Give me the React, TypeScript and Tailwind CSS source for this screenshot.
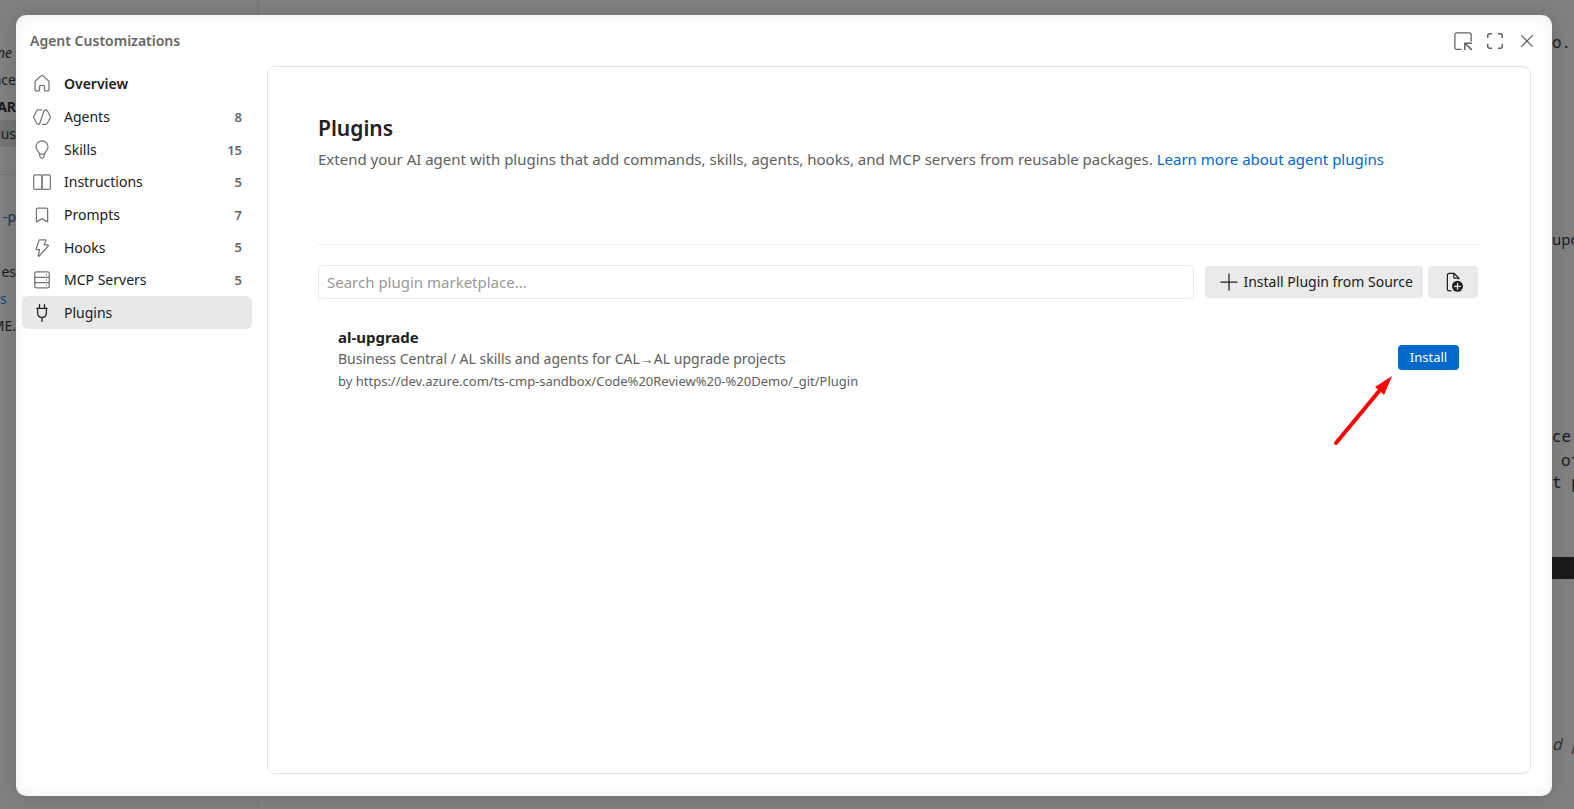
import React from "react";

type IconProps = { children: React.ReactNode; className?: string };

function Icon({ children, className = "size-5" }: IconProps) {
  return (
    <svg
      viewBox="0 0 16 16"
      className={className}
      fill="none"
      stroke="currentColor"
      strokeWidth="1"
      strokeLinecap="round"
      strokeLinejoin="round"
      aria-hidden="true"
    >
      {children}
    </svg>
  );
}

const icons = {
  home: (
    <path d="M7.3 1.5 2.800 5.400A1.200 1.200 0 0 0 2.400 6.300v6.200c0 .6.400 1 1 1h1.800c.5 0 .8-.3.8-.8V10c0-.6.4-1 1-1h2c.6 0 1 .4 1 1v2.700c0 .5.3.8.8.8h1.800c.6 0 1-.4 1-1V6.300c0-.3-.1-.7-.4-.9L8.700 1.500a1 1 0 0 0-1.400 0Z" />
  ),
  agent: (
    <>
      <path d="M7.800 2.200H5.200c-.6 0-1.100.3-1.400.8L1.500 7.200a1.600 1.600 0 0 0 0 1.600L3.700 13c.3.5.8.8 1.300.8.7 0 1.200-.4 1.400-1L9.500 3.200c.2-.6.700-1 1.300-1 .600 0 1.100.3 1.400.8l2.300 4.200c.3.5.3 1.100 0 1.600L12.200 13c-.3.5-.8.8-1.400.8H8.400" />
    </>
  ),
  bulb: (
    <>
      <path d="M6 11.200c-.2-1-.7-1.700-1.400-2.500A4.700 4.700 0 0 1 3.200 5.500a4.800 4.800 0 0 1 9.600 0c0 1.200-.5 2.300-1.400 3.200-.7.800-1.200 1.500-1.400 2.500Z" />
      <path d="m6 11.200.4 2.200c.1.600.500 1 1.100 1h1c.6 0 1-.4 1.100-1l.4-2.200" />
    </>
  ),
  book: (
    <>
      <path d="M8 3.500c0-.8-.6-1.300-1.300-1.300H2.600c-.7 0-1.300.5-1.300 1.300v9c0 .7.600 1.300 1.300 1.300h4.100c.7 0 1.300-.6 1.300-1.300Z" />
      <path d="M8 3.500c0-.8.6-1.300 1.300-1.300h4.100c.7 0 1.300.5 1.300 1.300v9c0 .7-.6 1.300-1.300 1.300H9.300c-.7 0-1.300-.6-1.300-1.300Z" />
    </>
  ),
  bookmark: <path d="M3.500 13.500V3.700c0-.7.6-1.300 1.300-1.300h6.400c.7 0 1.300.6 1.300 1.300v9.800L8 10.900Z" />,
  zap: <path d="M6.200 1.400h4.400c.4 0 .6.300.5.600l-1.400 3.500h2.800c.5 0 .7.500.4.900L5.800 14.400c-.4.400-.9.100-.8-.4l1.100-4.700H3.900c-.4 0-.6-.3-.5-.7l2.200-6.700c.1-.3.300-.5.600-.5Z" />,
  server: (
    <>
      <rect x="2.200" y="1.500" width="11.600" height="12.800" rx="1.400" />
      <path d="M2.200 5.800h11.600M2.200 10h11.600M11.500 3.700h.1M11.500 7.900h.1M11.500 12.200h.1" />
    </>
  ),
  plug: (
    <>
      <path d="M6 1.200v3M10 1.200v3M8 11.500v3.200M3.800 4.200h8.400" />
      <path d="M4.500 4.200v3.500c0 2.300 1.400 3.800 3.500 3.800s3.500-1.500 3.500-3.800V4.200" />
    </>
  ),
};

const navItems: { label: string; icon: keyof typeof icons; count?: number }[] = [
  { label: "Agents", icon: "agent", count: 8 },
  { label: "Skills", icon: "bulb", count: 15 },
  { label: "Instructions", icon: "book", count: 5 },
  { label: "Prompts", icon: "bookmark", count: 7 },
  { label: "Hooks", icon: "zap", count: 5 },
  { label: "MCP Servers", icon: "server", count: 5 },
  { label: "Plugins", icon: "plug" },
];

function Backdrop() {
  return (
    <div
      aria-hidden="true"
      className="absolute inset-0 flex justify-between overflow-hidden bg-[#808080] text-sm leading-[27px] whitespace-nowrap text-[#1c1c1c]"
    >
      <div className="w-[259px] border-r border-[#777777] pt-[39px]">
        <div className="flex w-4 flex-col items-end">
          <div className="pr-1 italic">ne</div>
          <div>ace</div>
          <div className="font-bold">AR</div>
          <div className="flex w-full justify-end bg-[#747474]">Cus</div>
          <div className="h-7 w-full border-b border-[#777777]" />
          <div className="pt-7 text-[#0d3550]">-p</div>
          <div className="pt-7">es</div>
          <div className="w-full text-[#0d4a7a]">s</div>
          <div>ME.</div>
        </div>
      </div>
      <div className="w-[22px] pt-[30px] font-['Noto_Sans_Mono','DejaVu_Sans_Mono',monospace] text-base">
        <div>o.</div>
        <div className="pt-[174px] font-['Noto_Sans',sans-serif] text-[15px]">upd</div>
        <div className="pt-[172px] leading-[26px]">ce-</div>
        <div className="pl-[9px] leading-[22px]">of</div>
        <div className="leading-[22px]">t p</div>
        <div className="mt-[64px] h-[22px] bg-[#1b1b1b]" />
        <div className="pt-[153px] text-[#333333] italic">d p</div>
      </div>
    </div>
  );
}

function Sidebar() {
  return (
    <nav aria-label="Customizations" className="flex w-[230px] shrink-0 flex-col text-sm text-[#202020]">
      <a href="#overview" className="flex h-[35px] items-center gap-3 pl-[10px] font-semibold">
        <span className="text-[#757575]"><Icon>{icons.home}</Icon></span>
        Overview
      </a>
      <div className="grid h-[228px] grid-rows-7">
        {navItems.map((item) => {
          const selected = item.label === "Plugins";
          return (
            <a
              key={item.label}
              href={`#${item.label}`}
              aria-current={selected ? "page" : undefined}
              className={`flex items-center gap-3 rounded-md pr-[10px] pl-[10px] ${selected ? "bg-[#e8e8e8]" : ""}`}
            >
              <span className={selected ? "text-[#202020]" : "text-[#757575]"}><Icon>{icons[item.icon]}</Icon></span>
              <span className="flex-1">{item.label}</span>
              {item.count !== undefined && (
                <span className="text-[13px] font-semibold text-[#666666]">{item.count}</span>
              )}
            </a>
          );
        })}
      </div>
    </nav>
  );
}

function PluginCard() {
  return (
    <li className="flex items-start justify-between pr-[21px] pl-5">
      <div className="text-[#606060]">
        <h2 className="text-[15px] leading-[22px] font-bold text-[#202020]">al-upgrade</h2>
        <p className="text-sm leading-[22px]">Business Central / AL skills and agents for CAL→AL upgrade projects</p>
        <p className="text-[13px] leading-[22px]">by https://dev.azure.com/ts-cmp-sandbox/Code%20Review%20-%20Demo/_git/Plugin</p>
      </div>
      <div className="relative pt-[19px]">
        <button type="button" className="block h-[25px] w-[61px] rounded bg-[#0069cc] text-[13px] text-white">
          Install
        </button>
        <svg className="absolute top-[49px] right-[67px] h-[70px] w-[60px]" viewBox="0 0 60 70" aria-hidden="true">
          <path d="M4 68 48 15" stroke="#ff0000" strokeWidth="4" strokeLinecap="round" />
          <path d="M60 1 52 20 48 16 43 12Z" fill="#ff0000" />
        </svg>
      </div>
    </li>
  );
}

export default function App() {
  return (
    <div className="relative flex h-screen pt-[15px] pr-[22px] pb-[13px] pl-4 font-['Noto_Sans',sans-serif]">
      <Backdrop />
      <section
        role="dialog"
        aria-label="Agent Customizations"
        className="relative flex flex-1 flex-col rounded-[10px] bg-white pb-[22px] shadow-[0_0_20px_rgba(0,0,0,0.15),inset_0_0_14px_rgba(0,0,0,0.07)]"
      >
        <header className="flex h-[51px] shrink-0 items-center justify-between pt-px pr-[15px] pl-[14px]">
          <h2 className="text-sm font-semibold text-[#666666]">Agent Customizations</h2>
          <div className="flex gap-3 text-[#606060]">
            <button type="button" aria-label="Open in editor">
              <Icon>
                <path d="M6.500 14.700H3A1.500 1.500 0 0 1 1.500 13.200V3A1.500 1.500 0 0 1 3 1.500h10A1.500 1.500 0 0 1 14.500 3v5.200" />
                <path d="M9.400 14.700V9.700h5.200M9.700 10l5 4.700" strokeWidth="1.200" />
              </Icon>
            </button>
            <button type="button" aria-label="Full screen">
              <Icon>
                <path d="M2.200 5.200V3.700A1.500 1.500 0 0 1 3.700 2.200H5.200M10.800 2.200h1.500A1.500 1.500 0 0 1 13.800 3.700v1.500M13.800 10.800v1.500a1.500 1.500 0 0 1-1.500 1.500h-1.500M5.200 13.800H3.700a1.500 1.500 0 0 1-1.500-1.500v-1.500" strokeWidth="1.200" />
              </Icon>
            </button>
            <button type="button" aria-label="Close">
              <Icon>
                <path d="m3.700 3.700 8.600 8.600M12.300 3.700l-8.600 8.600" />
              </Icon>
            </button>
          </div>
        </header>
        <div className="flex flex-1 pr-[21px] pl-[6px]">
          <Sidebar />
          <main className="ml-[15px] flex-1 rounded-lg border border-[#e4e4e4] bg-white px-[50px] pt-[45px]">
            <h1 className="text-[21px] leading-8 font-semibold text-[#202020]">Plugins</h1>
            <p className="pt-px text-[15px] leading-7 text-[#606060]">
              Extend your AI agent with plugins that add commands, skills, agents, hooks, and MCP servers from reusable packages.{" "}
              <a href="#learn" className="text-[#0069cc]">Learn more about agent plugins</a>
            </p>
            <hr className="mt-[71px] border-[#eeeeee]" />
            <div className="flex items-center pt-5 pr-[2px]">
              <input
                type="text"
                aria-label="Search plugin marketplace"
                placeholder="Search plugin marketplace..."
                className="h-[34px] min-w-0 flex-1 rounded border border-[#eaeaea] px-2 text-[15px] placeholder:text-[#999999]"
              />
              <button type="button" className="ml-[11px] flex h-8 items-center gap-1 rounded bg-[#eaeaea] pr-[10px] pl-[14px] text-sm text-[#202020]">
                <Icon><path d="M8 1.500v13M1.500 8h13" /></Icon>
                Install Plugin from Source
              </button>
              <button type="button" aria-label="Create plugin" className="ml-[5px] flex h-8 w-[50px] items-center justify-center rounded bg-[#eaeaea] text-[#202020]">
                <Icon>
                  <path d="M6.500 15H5A1.500 1.500 0 0 1 3.500 13.500V2.500A1.500 1.500 0 0 1 5 1h3.800l3.900 3.900v.6M8.600 1.200v2.900c0 .5.300.8.800.8h3" />
                  <circle cx="11.600" cy="11.400" r="4.400" fill="currentColor" stroke="none" />
                  <path d="M11.600 9v4.800M9.200 11.400h4.800" stroke="#eaeaea" />
                </Icon>
              </button>
            </div>
            <ul className="pt-[27px]">
              <PluginCard />
            </ul>
          </main>
        </div>
      </section>
    </div>
  );
}
